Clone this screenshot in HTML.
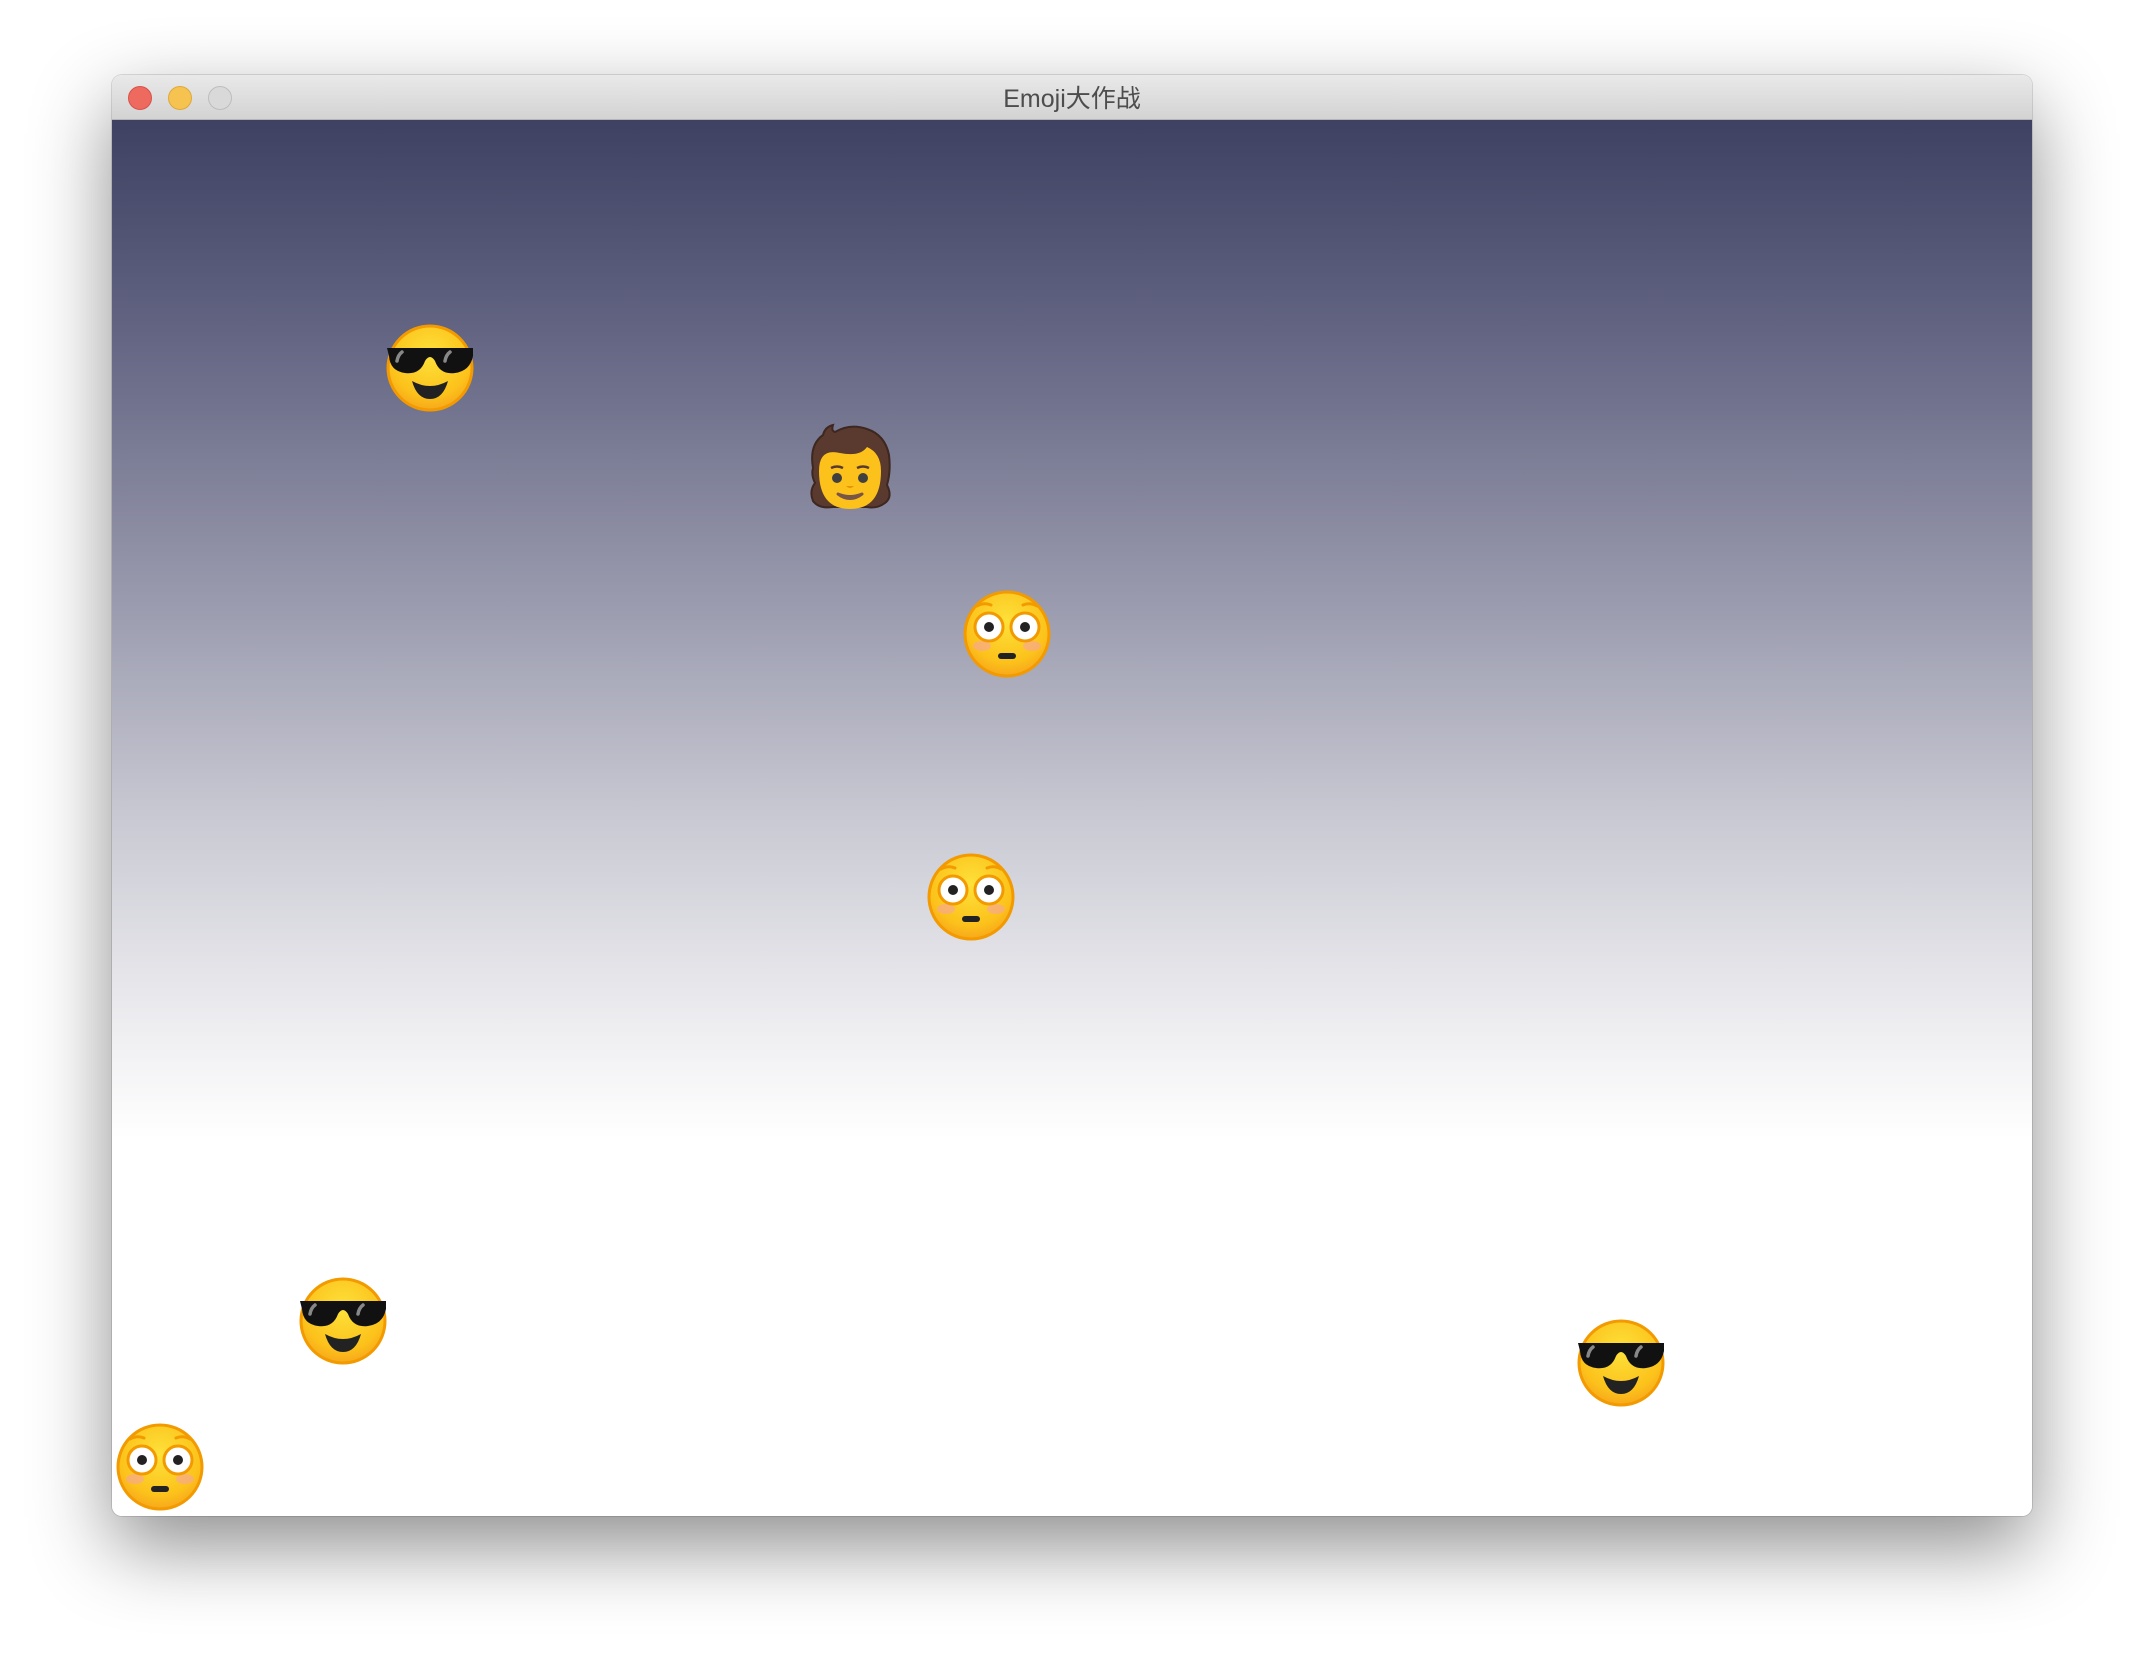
<!DOCTYPE html>
<html><head><meta charset="utf-8"><style>
html,body{margin:0;padding:0;width:2144px;height:1664px;background:#fff;overflow:hidden}
.win{position:absolute;left:112px;top:75px;width:1920px;height:1441px;border-radius:10px;overflow:hidden;
box-shadow:0 30px 80px rgba(0,0,0,0.45),0 0 0 1px rgba(0,0,0,0.12)}
.title{position:absolute;left:0;top:0;width:100%;height:45px;background:linear-gradient(#e9e9e9,#d3d3d3);border-bottom:1px solid #b5b5b5;box-sizing:border-box}
.title span{position:absolute;left:0;right:0;top:4px;text-align:center;font:25px "Liberation Sans","Noto Sans CJK SC",sans-serif;color:#4d4d4d}
.dot{position:absolute;top:11px;width:24px;height:24px;border-radius:50%;box-sizing:border-box}
.content{position:absolute;left:0;top:45px;width:100%;height:1396px;
background:linear-gradient(#3f4163 0%,#626482 15%,#9b9caf 35%,#c9c9d3 50%,#eeeef1 65%,#fff 73%,#fff 100%)}
svg.e{position:absolute;width:90px;height:90px}
</style></head><body>
<svg width="0" height="0" style="position:absolute">
<defs>
<radialGradient id="fg" cx="50%" cy="35%" r="65%"><stop offset="0" stop-color="#fde13a"/><stop offset="0.75" stop-color="#fcc21b"/><stop offset="1" stop-color="#f7a81b"/></radialGradient>
<symbol id="cool" viewBox="0 0 90 90">
<circle cx="45" cy="45" r="42" fill="url(#fg)" stroke="#f29a00" stroke-width="3"/>
<path d="M2 25 H88 V33 Q85 48 70 50 Q55 52 50 38 Q45 30 40 38 Q35 52 20 50 Q5 48 4 33 Z" fill="#111"/>
<path d="M12 38 Q13 32 17 29" stroke="#888" stroke-width="3.5" fill="none" stroke-linecap="round"/>
<path d="M60 38 Q61 32 65 29" stroke="#888" stroke-width="3.5" fill="none" stroke-linecap="round"/>
<path d="M27 58 Q45 68 63 58 Q58 76 45 76 Q32 76 27 58 Z" fill="#222"/>
</symbol>
<symbol id="flush" viewBox="0 0 90 90">
<circle cx="45" cy="45" r="42" fill="url(#fg)" stroke="#f29a00" stroke-width="3"/>
<ellipse cx="20" cy="57" rx="9" ry="5" fill="#f7a4a4" opacity="0.6"/>
<ellipse cx="70" cy="57" rx="9" ry="5" fill="#f7a4a4" opacity="0.6"/>
<path d="M15 17 Q22 13 29 16" stroke="#f29a00" stroke-width="3" fill="none" stroke-linecap="round"/>
<path d="M61 16 Q68 13 75 17" stroke="#f29a00" stroke-width="3" fill="none" stroke-linecap="round"/>
<circle cx="27" cy="38" r="14" fill="#fff" stroke="#f29a00" stroke-width="3"/>
<circle cx="63" cy="38" r="14" fill="#fff" stroke="#f29a00" stroke-width="3"/>
<circle cx="27" cy="38" r="5" fill="#222"/><circle cx="63" cy="38" r="5" fill="#222"/>
<rect x="36" y="64" width="18" height="6" rx="3" fill="#222"/>
</symbol>
<symbol id="person" viewBox="0 0 90 90">
<path d="M8 45 Q4 22 18 12 Q20 4 28 2 Q26 8 30 9 Q45 0 62 6 Q80 12 84 32 Q86 48 82 62 Q88 74 80 80 Q72 86 62 84 L28 84 Q14 86 8 78 Q4 68 10 60 Q6 52 8 45 Z" fill="#5a3a2e" stroke="#3d2720" stroke-width="2"/>
<path d="M14 48 Q14 25 35 30 Q55 34 62 24 Q76 30 76 48 Q76 86 45 86 Q14 86 14 48 Z" fill="#fcc21b"/>
<circle cx="32" cy="55" r="5" fill="#404040"/><circle cx="58" cy="55" r="5" fill="#404040"/>
<path d="M26 45 Q32 42 38 45 M52 45 Q58 42 64 45" stroke="#5a3a2e" stroke-width="2.5" fill="none"/>
<path d="M41 63 Q45 67 49 63 Z" fill="#e59600"/>
<path d="M33 71 Q45 80 57 71 Q45 76 33 71 Z" fill="#795548" stroke="#795548" stroke-width="3" stroke-linejoin="round"/>
</symbol>
</defs></svg>
<div class="win">
<div class="title">
<div class="dot" style="left:16px;background:#ee6a5f;border:1px solid #d6524a"></div>
<div class="dot" style="left:56px;background:#f6c250;border:1px solid #dea93a"></div>
<div class="dot" style="left:96px;background:#d9d9d9;border:1px solid #bdbdbd"></div>
<span>Emoji大作战</span>
</div>
<div class="content"></div>
</div>
<svg class="e" style="left:385px;top:323px"><use href="#cool"/></svg>
<svg class="e" style="left:805px;top:423px"><use href="#person"/></svg>
<svg class="e" style="left:962px;top:589px"><use href="#flush"/></svg>
<svg class="e" style="left:926px;top:852px"><use href="#flush"/></svg>
<svg class="e" style="left:298px;top:1276px"><use href="#cool"/></svg>
<svg class="e" style="left:1576px;top:1318px"><use href="#cool"/></svg>
<svg class="e" style="left:115px;top:1422px"><use href="#flush"/></svg>
</body></html>
